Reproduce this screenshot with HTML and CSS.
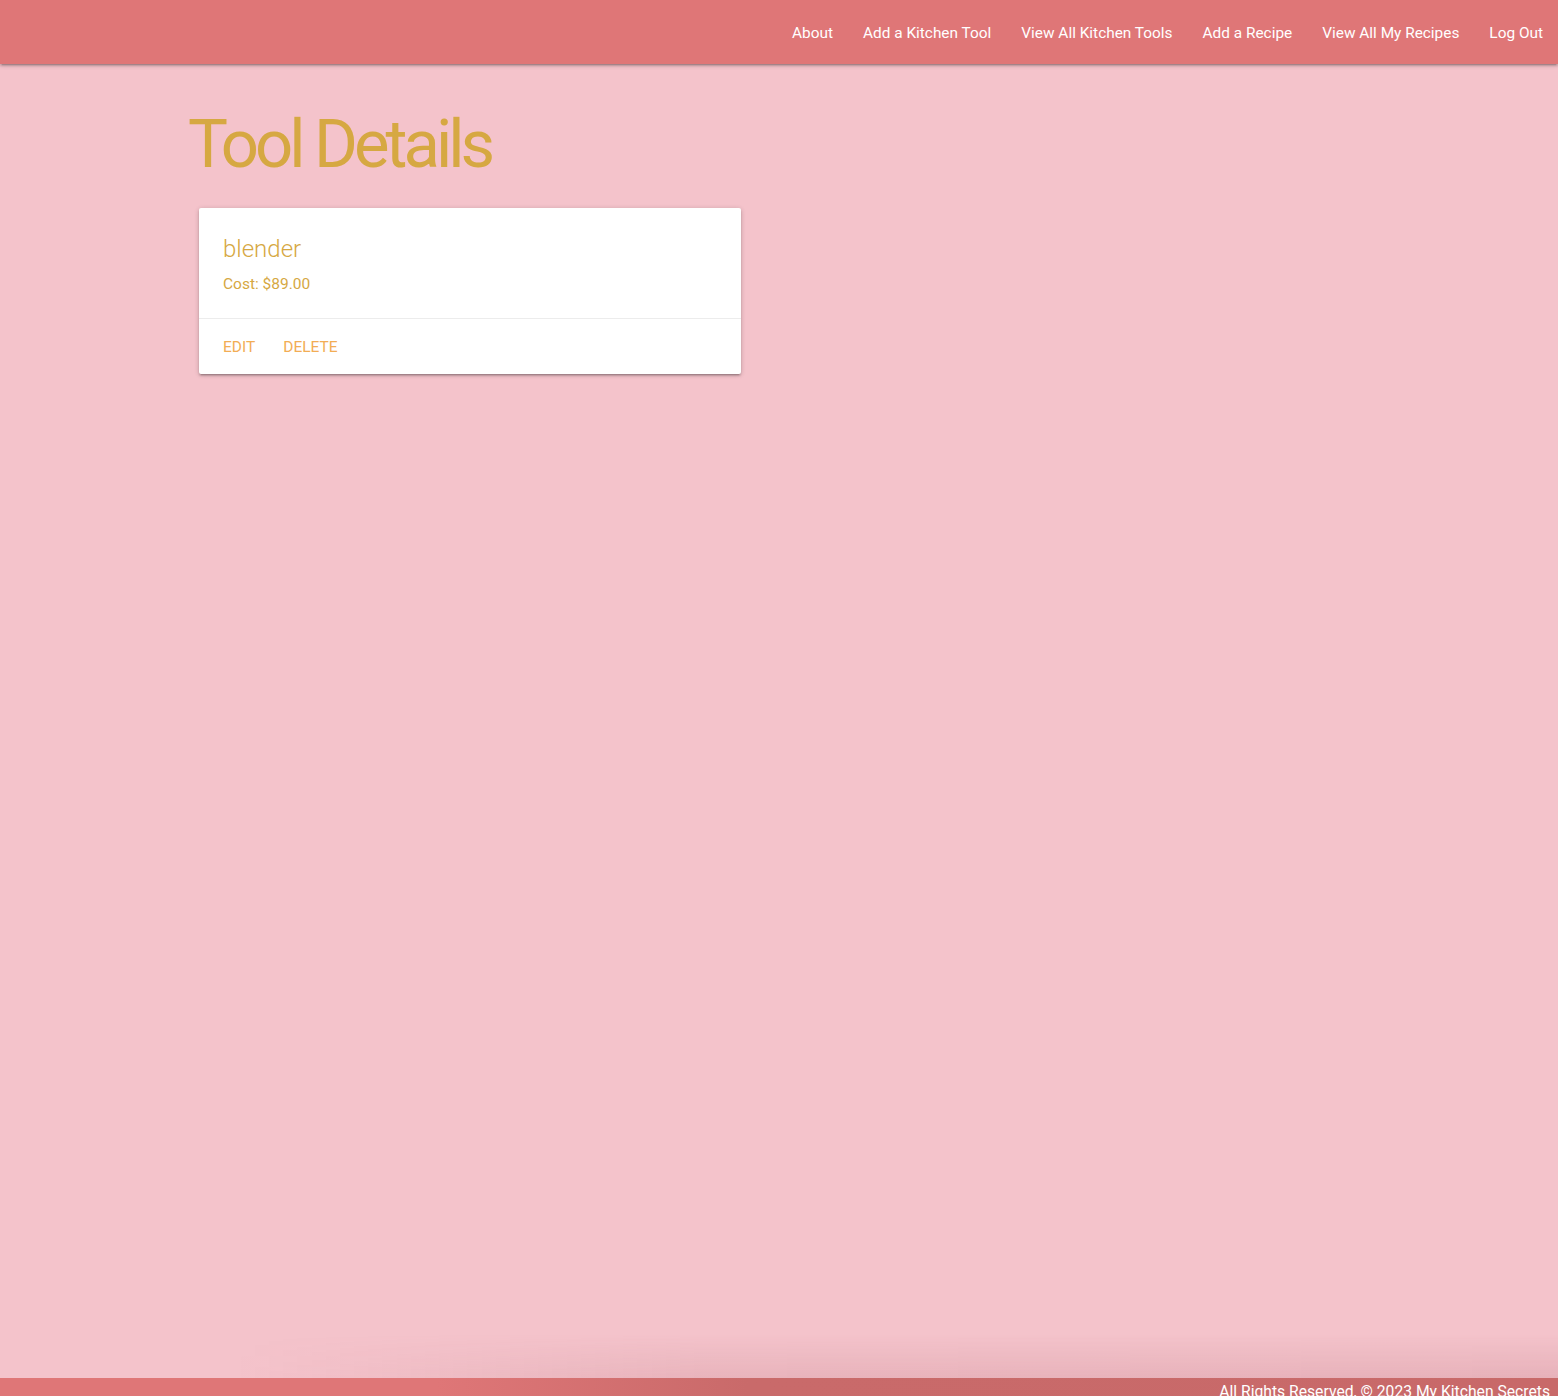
FILE: index.html
```html
<!DOCTYPE html>
<html lang="en">
<head>
<meta charset="utf-8">
<title>Tool Details</title>
<link rel="stylesheet" href="styles.css">
</head>
<body>
<header class="navbar">
  <nav class="nav-links">
    <a href="#">About</a>
    <a href="#">Add a Kitchen Tool</a>
    <a href="#">View All Kitchen Tools</a>
    <a href="#">Add a Recipe</a>
    <a href="#">View All My Recipes</a>
    <a href="#">Log Out</a>
  </nav>
</header>
<main class="main">
  <div class="container">
    <h1 class="page-title">Tool Details</h1>
    <div class="card">
      <div class="card-content">
        <span class="card-title">blender</span>
        <p class="card-cost">Cost: $89.00</p>
      </div>
      <div class="card-action">
        <a href="#">EDIT</a>
        <a href="#">DELETE</a>
      </div>
    </div>
  </div>
</main>
<footer class="footer">
  <div class="footer-text">All Rights Reserved, © 2023 My Kitchen Secrets</div>
</footer>
</body>
</html>
```

FILE: styles.css
```css
html, body {
  margin: 0;
  padding: 0;
  height: 100%;
  overflow: hidden;
}
body {
  background: #f4c3cb;
  font-family: Roboto, "Liberation Sans", sans-serif;
  display: flex;
  flex-direction: column;
}
.navbar {
  height: 64px;
  flex: none;
  background: #df7677;
  box-shadow: 0 2px 2px 0 rgba(0,0,0,0.14), 0 3px 1px -2px rgba(0,0,0,0.12), 0 1px 5px 0 rgba(0,0,0,0.2);
  display: flex;
  justify-content: flex-end;
  position: relative;
  z-index: 2;
}
.nav-links {
  display: flex;
}
.nav-links a {
  color: #fff;
  text-decoration: none;
  font-size: 15.4px;
  line-height: 64px;
  padding: 1px 15px 0;
}
.main {
  flex: 1;
  position: relative;
}
.main::after {
  content: "";
  position: absolute;
  left: 0;
  right: 0;
  bottom: 0;
  height: 44px;
  background: linear-gradient(90deg, rgba(160,80,90,0) 15%, rgba(160,80,90,0.13) 45%, rgba(160,80,90,0.15) 100%);
  -webkit-mask-image: linear-gradient(180deg, transparent, #000);
  mask-image: linear-gradient(180deg, transparent, #000);
}
.container {
  width: 1182px;
  margin: 0 auto;
  padding-top: 42px;
}
.page-title {
  margin: 0;
  font-size: 67px;
  font-weight: 400;
  line-height: 76px;
  color: #d6a842;
  letter-spacing: -4px;
}
.card {
  margin: 26px 0 0 11px;
  width: 542px;
  background: #fff;
  border-radius: 2px;
  box-shadow: 0 2px 2px 0 rgba(0,0,0,0.14), 0 3px 1px -2px rgba(0,0,0,0.12), 0 1px 5px 0 rgba(0,0,0,0.2);
}
.card-content {
  padding: 24px;
  height: 62px;
}
.card-title {
  display: block;
  font-size: 24px;
  font-weight: 300;
  line-height: 34px;
  color: #d6a842;
}
.card-cost {
  margin: 8px 0 0;
  font-size: 15.5px;
  line-height: 20px;
  color: #d6a842;
}
.card-action {
  border-top: 1px solid rgba(160,160,160,0.2);
  padding: 16px 24px;
  height: 23px;
  display: flex;
  gap: 28px;
}
.card-action a {
  color: #f2ad55;
  text-decoration: none;
  font-size: 15.5px;
  line-height: 24px;
}
.footer {
  flex: none;
  height: 18px;
  background: linear-gradient(90deg, #df7677 0%, #df7677 28%, #c96a6a 48%, #c86969 100%);
  display: flex;
  justify-content: flex-end;
  overflow: hidden;
}
.footer-text {
  color: #fff;
  font-size: 15.7px;
  line-height: 24px;
  padding-top: 2px;
  padding-right: 8px;
  white-space: nowrap;
}
```
